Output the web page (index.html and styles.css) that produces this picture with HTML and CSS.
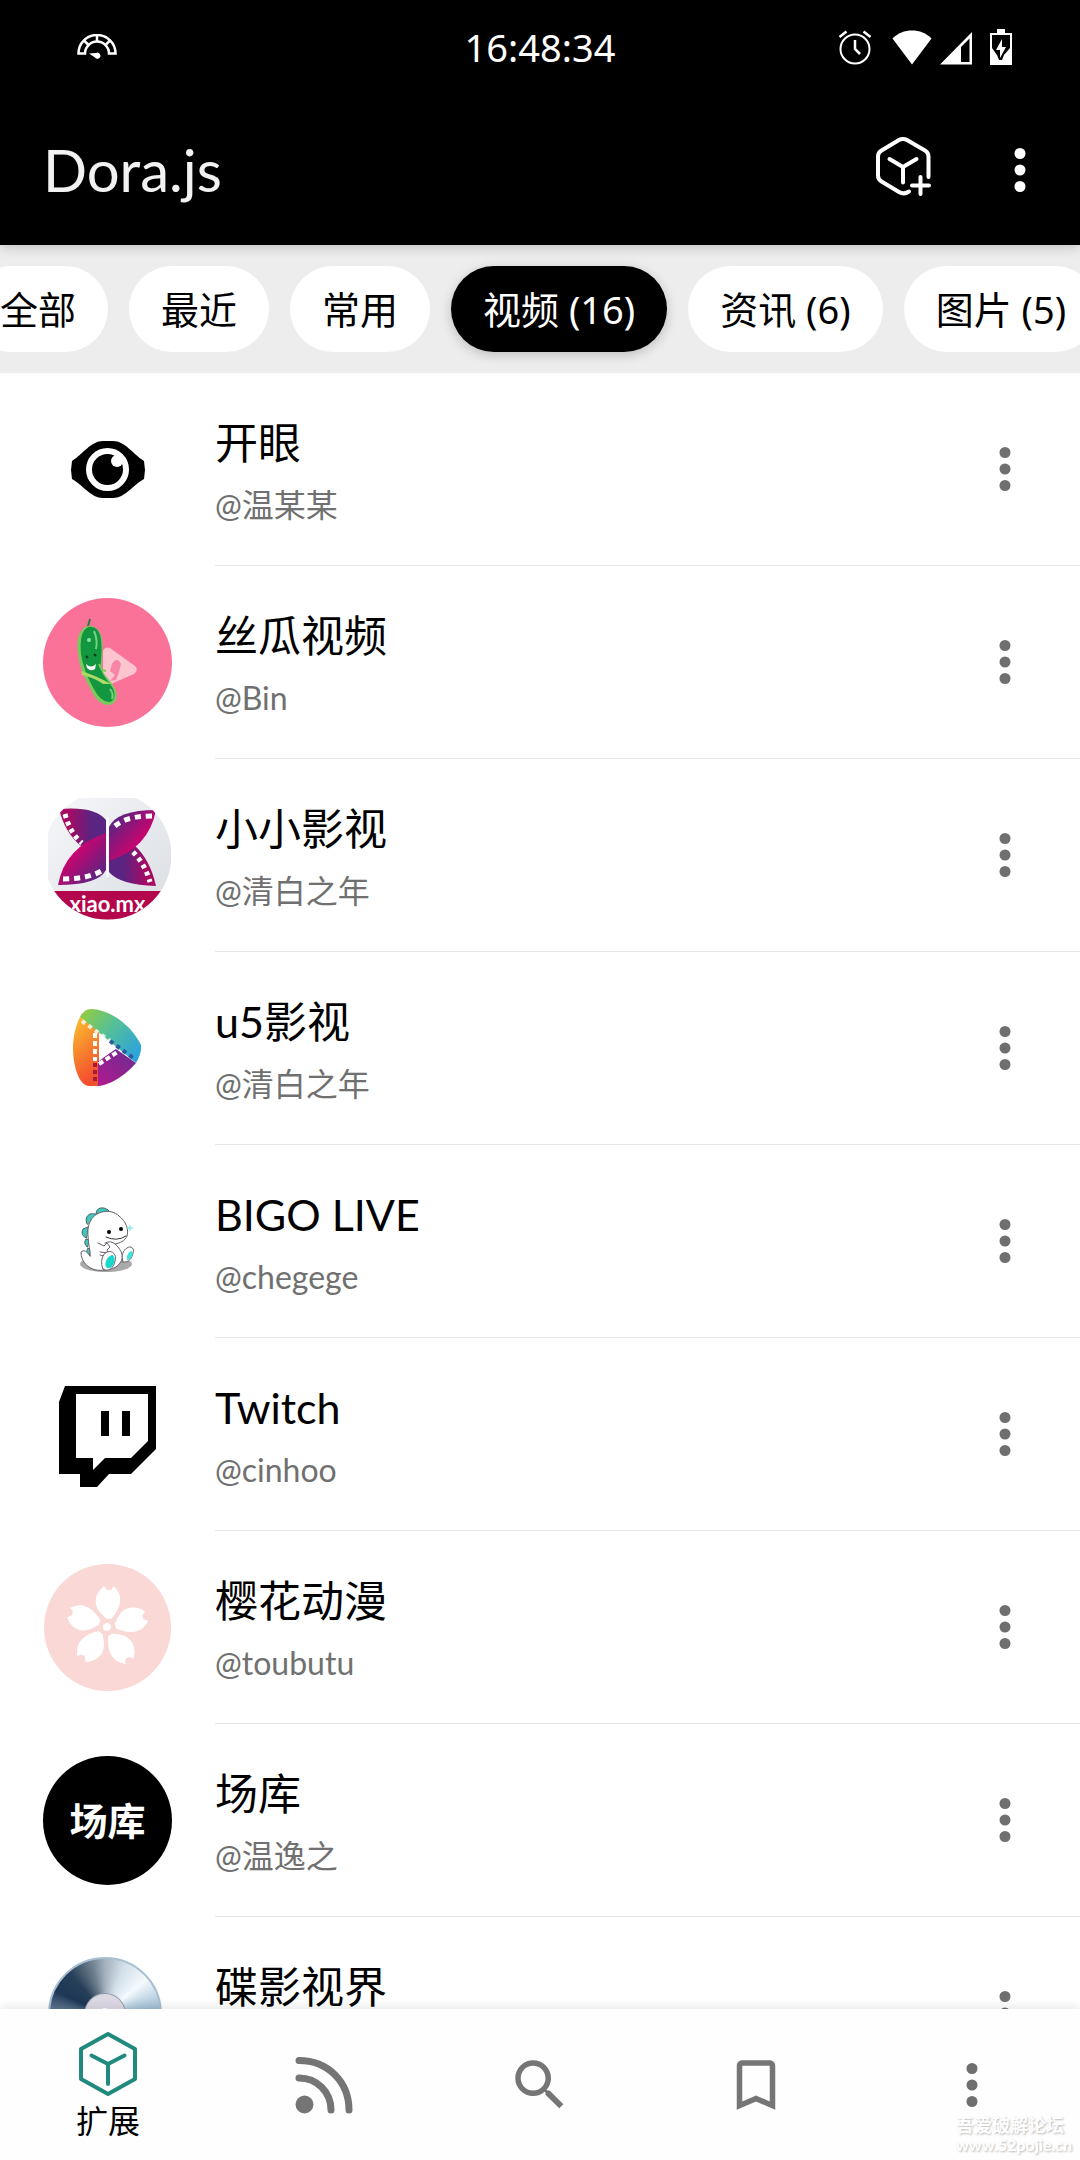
FILE: index.html
```html
<!DOCTYPE html>
<html lang="zh-CN">
  <head>
    <meta charset="UTF-8" />
    <meta name="viewport" content="width=device-width, initial-scale=1.0" />
    <title>Dora.js</title>
    <link rel="stylesheet" href="styles.css" />
  </head>
  <body>
    <!-- shared icons -->
    <svg class="sprite" aria-hidden="true">
      <symbol id="more" viewBox="0 0 24 24">
        <circle cx="12" cy="6" r="2" />
        <circle cx="12" cy="12" r="2" />
        <circle cx="12" cy="18" r="2" />
      </symbol>
    </svg>

    <header class="header">
      <div class="status-bar">
        <svg class="gauge" width="40" height="26" viewBox="0 0 40 26" fill="none" stroke="#fff" stroke-width="2.5">
          <path d="M1.5 19.5a18.5 18.5 0 0 1 37 0h-6.5a12 12 0 0 0-24 0z" />
          <path d="M20 1v7M7 6.5l5 5M33 6.5l-5 5" />
          <path d="M12 19.500l7-.5a3 3 0 1 1-1 4.500z" fill="#fff" stroke="none" />
        </svg>
        <time class="clock">16:48:34</time>
        <div class="status-icons">
          <svg class="alarm" width="34" height="36" viewBox="0 0 34 36" fill="none" stroke="#fff" stroke-width="2">
            <circle cx="17" cy="20" r="14.5" />
            <path d="M17 11v9l5 5M1.5 8l7-5.5M32.5 8l-7-5.5" stroke-width="2.5" />
          </svg>
          <svg class="wifi" width="40" height="36" viewBox="0 0 40 36">
            <path d="M20 35.500L.5 9.500C6 4 12.500 1.500 20 1.500S34 4 39.500 9.500z" fill="#fff" />
          </svg>
          <svg class="signal" width="32" height="36" viewBox="0 0 32 36">
            <path d="M0 35.500L32 3v32.500zM21 33h8.500V9.500L21 18z" fill="#fff" fill-rule="evenodd" />
          </svg>
          <svg class="battery" width="22" height="36" viewBox="0 0 22 36">
            <path d="M7 0h8v4h7v32H0V4h7z" fill="#fff" />
            <path d="M2 6h18v13l-6 7-2 5H9l-2-5-5-7z" fill="#000" />
            <path d="M12 10L6 21h4v8l6-11h-4z" fill="#fff" />
          </svg>
        </div>
      </div>
      <div class="app-bar">
        <h1 class="app-title">Dora.js</h1>
        <button class="icon-button" aria-label="添加扩展">
          <svg width="66" height="66" viewBox="0 1 66 66" fill="none" stroke="#fff" stroke-width="4" stroke-linecap="round" stroke-linejoin="round">
            <path d="M58.500 41V20.500q0-4-3.500-6L37 4q-4-2-8 0L11.500 14.500q-3.500 2-3.500 6v19q0 4 3.500 6L29 56q5 3 10-.5" />
            <path d="M19.500 23L33 31l13.500-8M33 31v15.500M50.500 41v17M42 49.500h17" />
          </svg>
        </button>
        <button class="icon-button" aria-label="更多">
          <svg class="more"><use href="#more" /></svg>
        </button>
      </div>
    </header>

    <div class="filters">
      <div class="filter-track">
        <button class="chip">全部</button>
        <button class="chip">最近</button>
        <button class="chip">常用</button>
        <button class="chip active">视频 (16)</button>
        <button class="chip">资讯 (6)</button>
        <button class="chip">图片 (5)</button>
      </div>
    </div>

    <main class="content">
      <ul class="list">
        <li class="item">
          <svg class="avatar" viewBox="0 0 129 129">
            <path d="M28 65l1-9C40 49 48 36 60 36h10c12 0 20 13 31 20l1 9-1 9C90 80 82 93 70 93H60C48 93 40 80 29 74z" />
            <circle cx="64.500" cy="64.500" r="18.500" stroke="#fff" stroke-width="6" />
            <circle cx="74" cy="56" r="6" fill="#fff" />
            <path d="M71 49l10 2-2 8z" fill="#fff" />
          </svg>
          <div class="item-body">
            <div class="item-text">
              <h2>开眼</h2>
              <p>@温某某</p>
            </div>
            <button class="icon-button" aria-label="更多"><svg class="more"><use href="#more" /></svg></button>
          </div>
        </li>

        <li class="item">
          <svg class="avatar" viewBox="0 0 129 129">
            <circle cx="64.500" cy="64.500" r="64.500" fill="#fb7299" />
            <path d="M60 53q2-5 7-3l25 18q4 4-1 8L68 86q-6 2-8-4z" fill="#fdc6cf" />
            <path d="M69 66q5-8 9 0l-2 8-3 8-6 1 5-6-5-4z" fill="#f884a8" />
            <path d="M47 21l-3 11" stroke="#2a7b3b" stroke-width="2" />
            <path d="M45 29c-9 2-11 16-9 27 1 14 7 24 12 34 4 9 9 16 18 16 7-1 9-9 4-17-4-7-11-12-12-18-1-9 2-17 0-30-2-9-7-13-13-12z" fill="#7cc85f" stroke="#7cc85f" stroke-width="2" />
            <path d="M46 30c-8 3-8 15-7 26 2 13 7 24 12 33 4 8 9 14 15 14 5-1 6-7 2-14-4-6-10-11-11-18-1-9 2-17 0-29-1-9-5-13-11-12z" fill="#12963f" stroke="#12963f" stroke-width="2" />
            <path d="M51 33q4 9 2 18M67 91q4 5 2 10" stroke="#75d183" stroke-width="2" fill="none" />
            <circle cx="46" cy="42" r="2" fill="#8ee39c" />
            <path d="M43 58l2 2M51 56l2 2" stroke="#063e19" stroke-width="2" />
            <path d="M43 66q5 5 10 0l-1 5q-4 3-8-1z" fill="#fff" />
            <path d="M38 73q14 4 30 13l-8 0q-8-6-21-9z" fill="#aadb68" />
            <path d="M56 66l3 6 4 1" stroke="#7cc85f" stroke-width="2" fill="none" />
          </svg>
          <div class="item-body">
            <div class="item-text">
              <h2>丝瓜视频</h2>
              <p>@Bin</p>
            </div>
            <button class="icon-button" aria-label="更多"><svg class="more"><use href="#more" /></svg></button>
          </div>
        </li>

        <li class="item">
          <svg class="avatar" viewBox="0 0 129 129">
            <defs>
              <clipPath id="round"><circle cx="64.500" cy="64.500" r="64" /></clipPath>
              <linearGradient id="plate" x1="0" y1="0" x2="1" y2="1">
                <stop offset="0" stop-color="#f6f7f9" />
                <stop offset="1" stop-color="#d9dde3" />
              </linearGradient>
              <linearGradient id="wingDark" x1="0" y1="0" x2="1" y2="0">
                <stop offset="0.2" stop-color="#a80a62" />
                <stop offset="0.7" stop-color="#5a2482" />
              </linearGradient>
              <linearGradient id="wingDarkBack" x1="1" y1="0" x2="0" y2="0">
                <stop offset="0.2" stop-color="#a80a62" />
                <stop offset="0.7" stop-color="#5a2482" />
              </linearGradient>
              <linearGradient id="wingPink" x1="0" y1="0" x2="1" y2="1">
                <stop offset="0.3" stop-color="#d6006c" />
                <stop offset="0.8" stop-color="#672180" />
              </linearGradient>
              <linearGradient id="wingPinkBack" x1="1" y1="1" x2="0" y2="0">
                <stop offset="0.3" stop-color="#d6006c" />
                <stop offset="0.8" stop-color="#672180" />
              </linearGradient>
            </defs>
            <g clip-path="url(#round)">
              <rect x="5" y="7" width="123" height="122" rx="24" fill="url(#plate)" />
              <path d="M16 18q36-3 47 11v18L38 55Q22 42 16 18z" fill="url(#wingDark)" />
              <path d="M15 94q7-38 48-52v37q-8 15-48 15z" fill="url(#wingPink)" />
              <path d="M113 95q-36-1-47-14V68l25-14q16 14 22 41z" fill="url(#wingDarkBack)" />
              <path d="M113 19q-7 38-47 51V36q8-17 47-17z" fill="url(#wingPinkBack)" />
              <path d="M22 23q5 19 17 29" stroke="#fff" stroke-width="5" stroke-dasharray="4 4" fill="none" />
              <path d="M20 88q26 0 40-9" stroke="#fff" stroke-width="5" stroke-dasharray="6 5" fill="none" />
              <path d="M109 25q-29 0-40 13" stroke="#fff" stroke-width="5" stroke-dasharray="6 5" fill="none" />
              <path d="M90 61q12 12 17 30" stroke="#fff" stroke-width="5" stroke-dasharray="4 4" fill="none" />
              <path d="M64.500 26v60" stroke="#fff" stroke-width="2" />
              <rect x="5" y="100" width="123" height="29" fill="#b4064c" />
              <text class="xiao-label" x="64.500" y="121" text-anchor="middle">xiao.mx</text>
            </g>
          </svg>
          <div class="item-body">
            <div class="item-text">
              <h2>小小影视</h2>
              <p>@清白之年</p>
            </div>
            <button class="icon-button" aria-label="更多"><svg class="more"><use href="#more" /></svg></button>
          </div>
        </li>

        <li class="item">
          <svg class="avatar" viewBox="0 0 129 129">
            <defs>
              <linearGradient id="greenBlue" x1="0" y1="0" x2="1" y2="0.7">
                <stop offset="0.1" stop-color="#8bcb4a" />
                <stop offset="0.5" stop-color="#55c097" />
                <stop offset="1" stop-color="#2ea5d8" />
              </linearGradient>
              <linearGradient id="orange" x1="0" y1="0" x2="0.3" y2="1">
                <stop offset="0" stop-color="#fbc22d" />
                <stop offset="1" stop-color="#f4502f" />
              </linearGradient>
              <linearGradient id="purple" x1="0" y1="1" x2="1" y2="0">
                <stop offset="0" stop-color="#b01a8e" />
                <stop offset="1" stop-color="#6a2c91" />
              </linearGradient>
            </defs>
            <path d="M37 33L56 46V102H46C36 102 30 82 30 64c0-12 3-23 7-31z" fill="url(#orange)" />
            <path d="M55 77l18-12 20 14C84 90 68 101 55 102z" fill="url(#purple)" />
            <path d="M37 33q4-8 11-8c22 1 42 19 50 36q1 8-5 18z" fill="url(#greenBlue)" />
            <path d="M56 53l17 11-17 13z" fill="#fff" />
            <path d="M39 37l28 20" stroke="#fff" stroke-width="4" stroke-dasharray="4 4" opacity="0.8" />
            <path d="M67 57l26 19" stroke="#2c5a9c" stroke-width="4" stroke-dasharray="4 4" />
            <path d="M52 49v28" stroke="#fff" stroke-width="4" stroke-dasharray="5 3" />
            <path d="M52 79v21" stroke="#a51a3c" stroke-width="4" stroke-dasharray="4 3" />
            <path d="M56 80l20-13" stroke="#fff" stroke-width="4" stroke-dasharray="5 3" />
          </svg>
          <div class="item-body">
            <div class="item-text">
              <h2>u5影视</h2>
              <p>@清白之年</p>
            </div>
            <button class="icon-button" aria-label="更多"><svg class="more"><use href="#more" /></svg></button>
          </div>
        </li>

        <li class="item">
          <svg class="avatar" viewBox="0 0 129 129" stroke-linecap="round" stroke-linejoin="round">
            <ellipse cx="63" cy="87" rx="26" ry="8" fill="#aaa" />
            <g fill="#3fc8bb" stroke="#4d6a70">
              <path d="M53 36q1-6 8-5 5 1 6 5z" />
              <path d="M44 47q-3-7 3-10 6-1 7 1z" />
              <path d="M43 61q-6-3-3-9l5-2z" />
              <path d="M44 70q-4-4-1-8l3 1z" />
              <path d="M46 80q-4-4-1-9l2 2z" />
            </g>
            <path d="M47 75C45 62 43 50 48 43c5-9 20-12 28-4 7 5 10 14 8 20-2 5-7 7-12 8 6 5 10 13 5 19-4 7-17 8-24 7-9-2-15-9-15-18q4-4 9 4z" fill="#fff" stroke="#665f68" />
            <path d="M62 66q6-3 10 1" fill="none" stroke="#665f68" />
            <path d="M55 66l6 3 3-3 3 4-3 3 1 3-8-1M57 78q4 2 6-2" fill="none" stroke="#665f68" />
            <path d="M60 92c-3-6-1-15 4-17 6-2 10 3 8 9-1 6-6 12-12 8z" fill="#fff" stroke="#665f68" />
            <path d="M64 91c-4-3 0-12 5-13 5 1 2 15-5 13z" fill="#18d8cb" />
            <path d="M80 85c-2-6 0-12 4-14 4-3 8 1 6 5-1 5-4 10-10 9z" fill="#fff" stroke="#665f68" />
            <path d="M84 83c-1-4 2-9 5-9 2 3-1 9-5 9z" fill="#3de2d8" />
            <circle cx="66" cy="55" r="2" />
            <circle cx="78" cy="52" r="2" />
            <path d="M63 60q11 5 20-1" fill="none" stroke="#333" />
            <path d="M87 47l1 3 3 1-3 1-1 3-1-3-3-1 3-1z" fill="#8ceee8" />
          </svg>
          <div class="item-body">
            <div class="item-text">
              <h2>BIGO LIVE</h2>
              <p>@chegege</p>
            </div>
            <button class="icon-button" aria-label="更多"><svg class="more"><use href="#more" /></svg></button>
          </div>
        </li>

        <li class="item">
          <svg class="avatar" viewBox="0 0 129 129">
            <path fill-rule="evenodd" d="M22 16h91v63l-25 25H66l-12 13H37v-13H16V32zM33 24v64h17v12l12-12h26l17-17V24z" />
            <path d="M58 41h8v25h-8zM79 41h8v25h-8z" />
          </svg>
          <div class="item-body">
            <div class="item-text">
              <h2>Twitch</h2>
              <p>@cinhoo</p>
            </div>
            <button class="icon-button" aria-label="更多"><svg class="more"><use href="#more" /></svg></button>
          </div>
        </li>

        <li class="item">
          <svg class="avatar" viewBox="0 0 129 129">
            <defs>
              <path id="petal" d="M64 56C57 50 51 44 53 35c1-5 4-9 8-12l3 4h4l3-4c4 5 7 9 6 16-1 7-5 13-9 17q-2-1-4 0z" />
            </defs>
            <circle cx="64.500" cy="64.500" r="63.500" fill="#f9d8d6" />
            <g fill="#fff">
              <use href="#petal" />
              <use href="#petal" transform="rotate(72 64 64)" />
              <use href="#petal" transform="rotate(144 64 64)" />
              <use href="#petal" transform="rotate(216 64 64)" />
              <use href="#petal" transform="rotate(288 64 64)" />
            </g>
            <circle cx="64" cy="64" r="8" fill="#f9d8d6" />
            <circle cx="64" cy="64" r="4" fill="#fff" />
          </svg>
          <div class="item-body">
            <div class="item-text">
              <h2>樱花动漫</h2>
              <p>@toubutu</p>
            </div>
            <button class="icon-button" aria-label="更多"><svg class="more"><use href="#more" /></svg></button>
          </div>
        </li>

        <li class="item">
          <div class="avatar avatar-changku">场库</div>
          <div class="item-body">
            <div class="item-text">
              <h2>场库</h2>
              <p>@温逸之</p>
            </div>
            <button class="icon-button" aria-label="更多"><svg class="more"><use href="#more" /></svg></button>
          </div>
        </li>

        <li class="item">
          <div class="avatar avatar-disc">
            <div class="disc"><div class="disc-hub"></div></div>
          </div>
          <div class="item-body">
            <div class="item-text">
              <h2>碟影视界</h2>
            </div>
            <button class="icon-button" aria-label="更多"><svg class="more"><use href="#more" /></svg></button>
          </div>
        </li>
      </ul>
    </main>

    <nav class="bottom-nav">
      <a class="nav-item active" href="#extensions">
        <svg width="58" height="66" viewBox="0 0 58 66" fill="none" stroke="#1f8a7d" stroke-width="4" stroke-linecap="round" stroke-linejoin="round">
          <path d="M29 3l27 15v30L29 63 2 48V18z" />
          <path d="M12.500 24.500L29 33l16.500-8.500M29 33v20" />
        </svg>
        <span>扩展</span>
      </a>
      <a class="nav-item" href="#feeds" aria-label="订阅">
        <svg width="58" height="58" viewBox="0 0 58 58" fill="none" stroke="#757575" stroke-width="7" stroke-linecap="round">
          <path d="M4 4.500C33 4.500 54 26 54 54M4 22c18 0 32 14 32 32" />
          <circle cx="9.500" cy="48.500" r="9" fill="#757575" stroke="none" />
        </svg>
      </a>
      <a class="nav-item" href="#search" aria-label="搜索">
        <svg width="66" height="66" viewBox="0 0 24 24" fill="#757575">
          <path d="M15.500 14h-.79l-.28-.27A6.471 6.471 0 0 0 16 9.500 6.500 6.500 0 1 0 9.500 16c1.610 0 3.090-.59 4.230-1.570l.27.28v.79l5 4.990L20.490 19zm-6 0C7.010 14 5 11.990 5 9.500S7.010 5 9.500 5 14 7.010 14 9.500 11.990 14 9.500 14z" />
        </svg>
      </a>
      <a class="nav-item" href="#bookmarks" aria-label="收藏">
        <svg width="66" height="66" viewBox="0 0 24 24" fill="#757575">
          <path d="M17 3H7c-1.100 0-2 .9-2 2v16l7-3 7 3V5c0-1.100-.9-2-2-2zm0 15l-5-2.180L7 18V5h10z" />
        </svg>
      </a>
      <a class="nav-item" href="#more-menu" aria-label="更多">
        <svg class="more"><use href="#more" /></svg>
      </a>
      <div class="watermark">
        <div class="watermark-name">吾爱破解论坛</div>
        <div class="watermark-url">www.52pojie.cn</div>
      </div>
    </nav>
  </body>
</html>
```
FILE: styles.css
```css
* {
  box-sizing: border-box;
}
body {
  margin: 0;
  height: 100vh;
  display: flex;
  flex-direction: column;
  overflow: hidden;
  background: #fff;
  color: #000;
  font-family: Lato, "Noto Sans CJK SC", sans-serif;
}
button {
  border: none;
  background: none;
  padding: 0;
  font: inherit;
  color: inherit;
  cursor: pointer;
}
svg {
  display: block;
  flex-shrink: 0;
}
.sprite {
  position: absolute;
  width: 0;
  height: 0;
}
.more {
  width: 66px;
  height: 66px;
  fill: #6f6f6f;
}

/* header */
.header {
  position: relative;
  z-index: 1;
  background: #000;
  color: #fff;
  box-shadow: 0 2px 12px rgba(0, 0, 0, 0.2);
}
.header .more {
  fill: #fff;
}
.status-bar {
  display: grid;
  grid-template-columns: 1fr auto 1fr;
  align-items: center;
  height: 94px;
  padding: 0 68px;
}
.gauge {
  margin-left: 9px;
}
.clock {
  font-family: "Noto Sans", sans-serif;
  font-size: 38px;
}
.status-icons {
  display: flex;
  justify-content: flex-end;
}
.wifi {
  margin-left: 20px;
}
.signal {
  margin-left: 8px;
}
.battery {
  margin-left: 18px;
}
.app-bar {
  display: flex;
  align-items: center;
  gap: 51px;
  height: 151px;
  padding: 0 27px 0 43px;
}
.app-title {
  flex: 1;
  margin: 0;
  color: #f2f2f2;
  font-size: 58px;
  font-weight: 400;
}

/* category chips */
.filters {
  flex-shrink: 0;
  overflow: hidden;
  padding: 21px 0;
  background: #ededed;
}
.filter-track {
  display: flex;
  gap: 21px;
  margin-left: -32px;
}
.chip {
  flex-shrink: 0;
  height: 86px;
  padding: 0 32px;
  border-radius: 43px;
  background: #fff;
  font-family: "Noto Sans", "Noto Sans CJK SC", sans-serif;
  font-size: 38px;
  line-height: 56px;
  white-space: nowrap;
}
.chip.active {
  background: #000;
  color: #fff;
  box-shadow: 0 3px 12px rgba(0, 0, 0, 0.2);
}

/* extension list */
.content {
  flex: 1;
  min-height: 0;
  overflow: hidden;
}
.list {
  margin: 0;
  padding: 0;
  list-style: none;
}
.item {
  display: flex;
  align-items: center;
  gap: 43px;
  height: 193px;
  padding-left: 43px;
}
.avatar {
  flex-shrink: 0;
  width: 129px;
  height: 129px;
}
.item-body {
  flex: 1;
  display: flex;
  align-items: center;
  height: 193px;
  padding-right: 42px;
  border-bottom: 1px solid #e6e6e6;
}
.item-text {
  flex: 1;
  align-self: flex-start;
  padding-top: 38px;
}
.item-text h2 {
  margin: 0;
  font-size: 43px;
  font-weight: 400;
  line-height: 64px;
}
.item-text p {
  margin: 6px 0 0;
  color: #707070;
  font-size: 32px;
  line-height: 48px;
}
.xiao-label {
  fill: #fff;
  font-size: 22px;
  font-weight: 700;
}
.avatar-changku {
  border-radius: 50%;
  background: #000;
  color: #fff;
  font-size: 38px;
  font-weight: 700;
  line-height: 129px;
  text-align: center;
}
.avatar-disc {
  padding: 8px 5px;
}
.disc {
  display: grid;
  place-items: center;
  width: 114px;
  height: 114px;
  border: 2px solid #a9c0d3;
  border-radius: 50%;
  background: conic-gradient(#a3b1bd, #d0dde7 20deg, #f5fafd 50deg, #8fb2cd 90deg, #dce8f0 180deg, #8fa8bc 262deg, #1c3655 295deg, #274059 320deg, #6f7f8e 345deg, #a3b1bd);
}
.disc-hub {
  width: 40px;
  height: 40px;
  border: 14px solid #ddd9e4;
  border-radius: 50%;
  background: #fff;
  box-shadow: 0 0 0 1px #8d99a8;
}

/* bottom navigation */
.bottom-nav {
  position: relative;
  display: flex;
  flex-shrink: 0;
  height: 151px;
  background: #fefefe;
  box-shadow: 0 -2px 10px rgba(0, 0, 0, 0.1);
}
.nav-item {
  flex: 1;
  display: flex;
  flex-direction: column;
  align-items: center;
  justify-content: center;
  color: #000;
  font-size: 32px;
  line-height: 44px;
  text-decoration: none;
}
.nav-item.active {
  gap: 2px;
  padding-top: 4px;
}
.watermark {
  position: absolute;
  right: 8px;
  bottom: 6px;
  color: #fff;
  font-weight: 700;
  text-shadow: 1px 1px 2px #bbb;
}
.watermark-name {
  font-size: 18px;
  line-height: 22px;
}
.watermark-url {
  font-size: 16px;
  line-height: 18px;
}
```
